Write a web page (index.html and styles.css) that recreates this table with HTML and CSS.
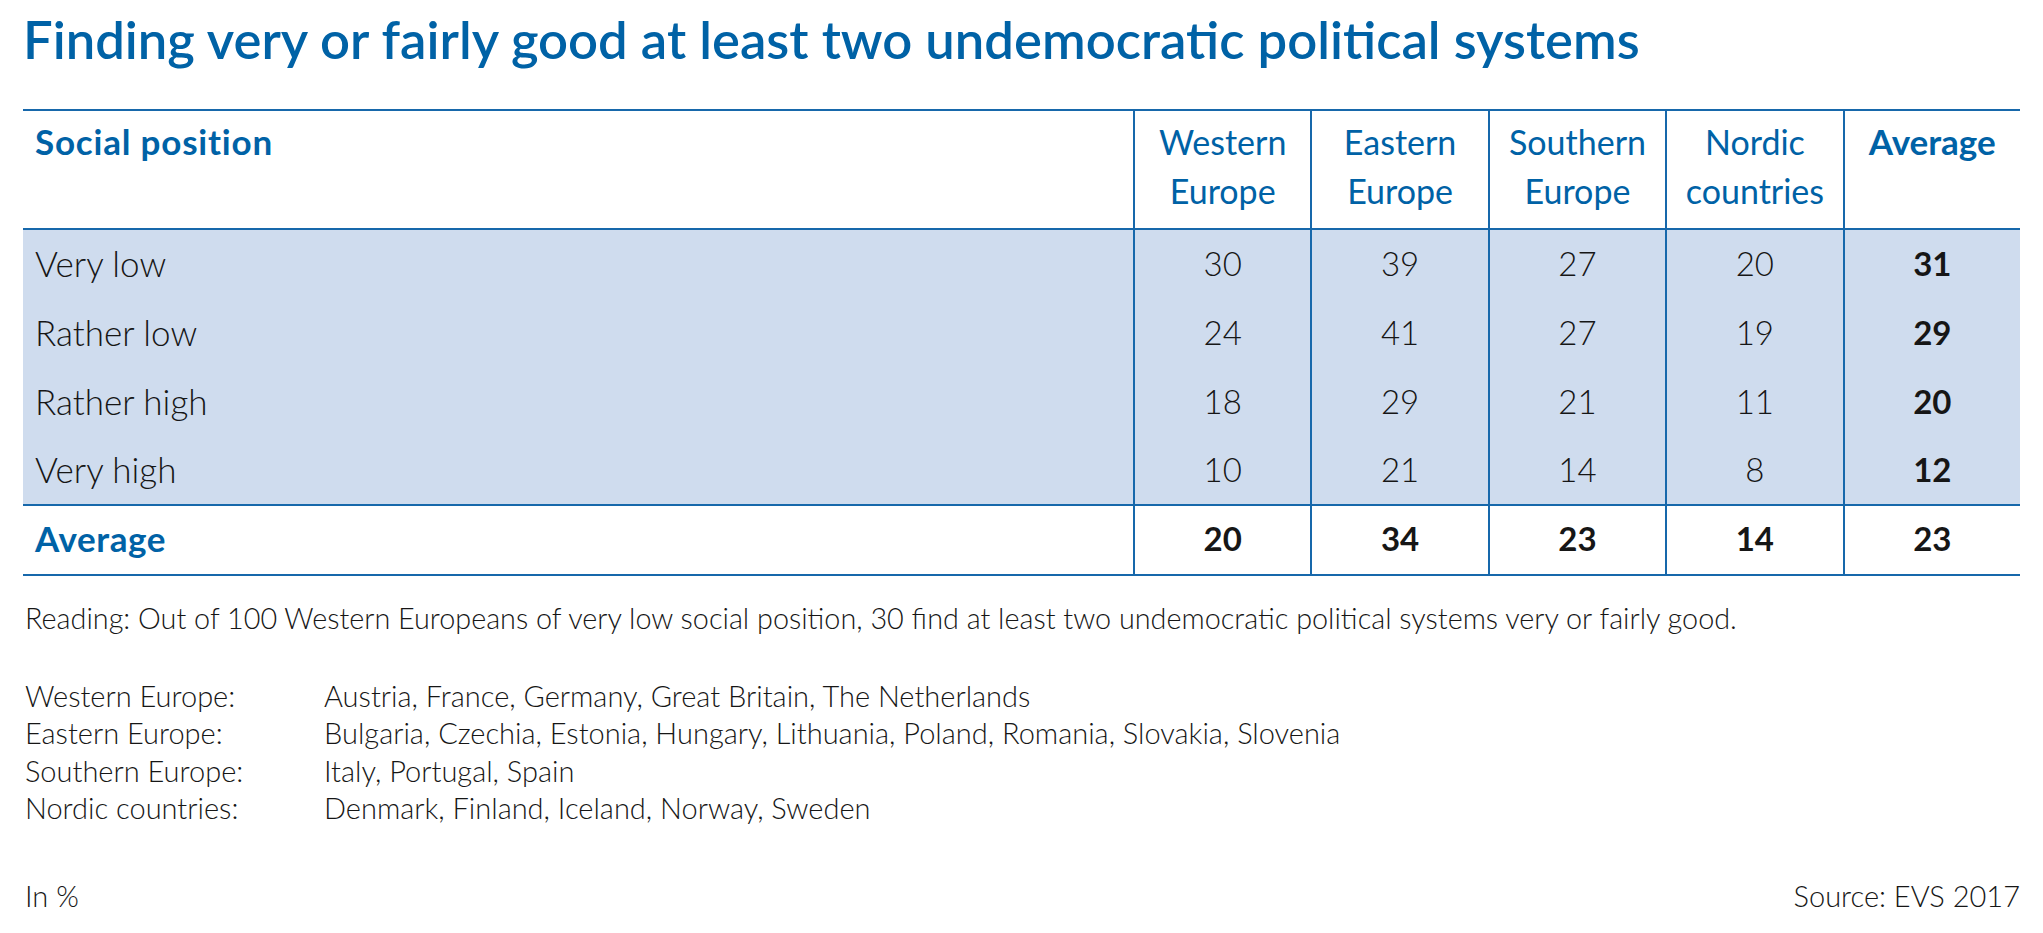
FILE: index.html
```html
<!DOCTYPE html>
<html lang="en">
<head>
<meta charset="utf-8">
<title>Finding very or fairly good at least two undemocratic political systems</title>
<link rel="stylesheet" href="styles.css">
</head>
<body>
<div class="page">
  <h1 class="title">Finding very or fairly good at least two undemocratic political systems</h1>
  <table class="data">
    <colgroup>
      <col class="c-label">
      <col class="c-num"><col class="c-num"><col class="c-num"><col class="c-num"><col class="c-num">
    </colgroup>
    <thead>
      <tr>
        <th class="lbl">Social position</th>
        <th>Western<br>Europe</th>
        <th>Eastern<br>Europe</th>
        <th>Southern<br>Europe</th>
        <th>Nordic<br>countries</th>
        <th class="avg">Average</th>
      </tr>
    </thead>
    <tbody>
      <tr><td class="lbl">Very low</td><td>30</td><td>39</td><td>27</td><td>20</td><td class="avg">31</td></tr>
      <tr><td class="lbl">Rather low</td><td>24</td><td>41</td><td>27</td><td>19</td><td class="avg">29</td></tr>
      <tr><td class="lbl">Rather high</td><td>18</td><td>29</td><td>21</td><td>11</td><td class="avg">20</td></tr>
      <tr><td class="lbl">Very high</td><td>10</td><td>21</td><td>14</td><td>8</td><td class="avg">12</td></tr>
    </tbody>
    <tfoot>
      <tr><td class="lbl">Average</td><td>20</td><td>34</td><td>23</td><td>14</td><td>23</td></tr>
    </tfoot>
  </table>
  <p class="reading">Reading: Out of 100 Western Europeans of very low social position, 30 find at least two undemocratic political systems very or fairly good.</p>
  <dl class="legend">
    <dt>Western Europe:</dt><dd>Austria, France, Germany, Great Britain, The Netherlands</dd>
    <dt>Eastern Europe:</dt><dd>Bulgaria, Czechia, Estonia, Hungary, Lithuania, Poland, Romania, Slovakia, Slovenia</dd>
    <dt>Southern Europe:</dt><dd>Italy, Portugal, Spain</dd>
    <dt>Nordic countries:</dt><dd>Denmark, Finland, Iceland, Norway, Sweden</dd>
  </dl>
  <div class="foot">
    <span>In %</span>
    <span>Source: EVS 2017</span>
  </div>
</div>
</body>
</html>
```
FILE: styles.css
```css
html, body {
  margin: 0;
  padding: 0;
  background: #ffffff;
}

.page {
  font-family: Lato, "Open Sans", "Liberation Sans", sans-serif;
  color: #161616;
  padding: 9px 23px 0 23px;
  width: 1997px;
}

.title {
  margin: 0 0 40px 0;
  font-size: 52.6px;
  line-height: 60px;
  font-weight: 600;
  color: #0062a6;
}

.data {
  width: 1997px;
  table-layout: fixed;
  border-collapse: separate;
  border-spacing: 0;
  border-top: 2px solid #1768ab;
}

.c-label { width: 1110px; }
.c-num { width: 177.4px; }

.data th {
  font-size: 34px;
  line-height: 49px;
  font-weight: 400;
  color: #0062a6;
  text-align: center;
  vertical-align: top;
  padding: 6px 4px 13px 4px;
  border-bottom: 2px solid #1768ab;
}

.data th.lbl {
  text-align: left;
  font-weight: 700;
  font-size: 35px;
  letter-spacing: 0.8px;
  padding-left: 12px;
}

.data th.avg {
  font-weight: 700;
  font-size: 35px;
}

.data td {
  font-size: 33px;
  line-height: 40px;
  font-weight: 300;
  text-align: center;
  vertical-align: middle;
  height: 69px;
  padding: 0 4px 4px 4px;
  box-sizing: border-box;
}

.data th + th,
.data td + td {
  border-left: 2px solid #1768ab;
}

.data td.lbl {
  text-align: left;
  font-size: 35px;
  padding-left: 12px;
}

.data tbody td {
  background: #cfdcee;
}

.data tbody tr:last-child td {
  border-bottom: 2px solid #1768ab;
}

.data tbody td.avg {
  font-weight: 700;
}

.data tfoot td {
  font-weight: 700;
  height: 70px;
  border-bottom: 2px solid #1768ab;
}

.data tfoot td.lbl {
  color: #0062a6;
  letter-spacing: 0.6px;
}

.reading {
  margin: 24px 0 0 0;
  padding-left: 2px;
  font-size: 28.8px;
  line-height: 37.5px;
  font-weight: 300;
}

.legend {
  display: grid;
  grid-template-columns: 299px 1fr;
  margin: 39px 0 0 0;
  padding-left: 2px;
  font-size: 29px;
  line-height: 37.5px;
  font-weight: 300;
}

.legend dt,
.legend dd {
  margin: 0;
}

.foot {
  display: flex;
  justify-content: space-between;
  margin-top: 50px;
  padding-left: 2px;
  font-size: 29px;
  line-height: 37.5px;
  font-weight: 300;
}
```
